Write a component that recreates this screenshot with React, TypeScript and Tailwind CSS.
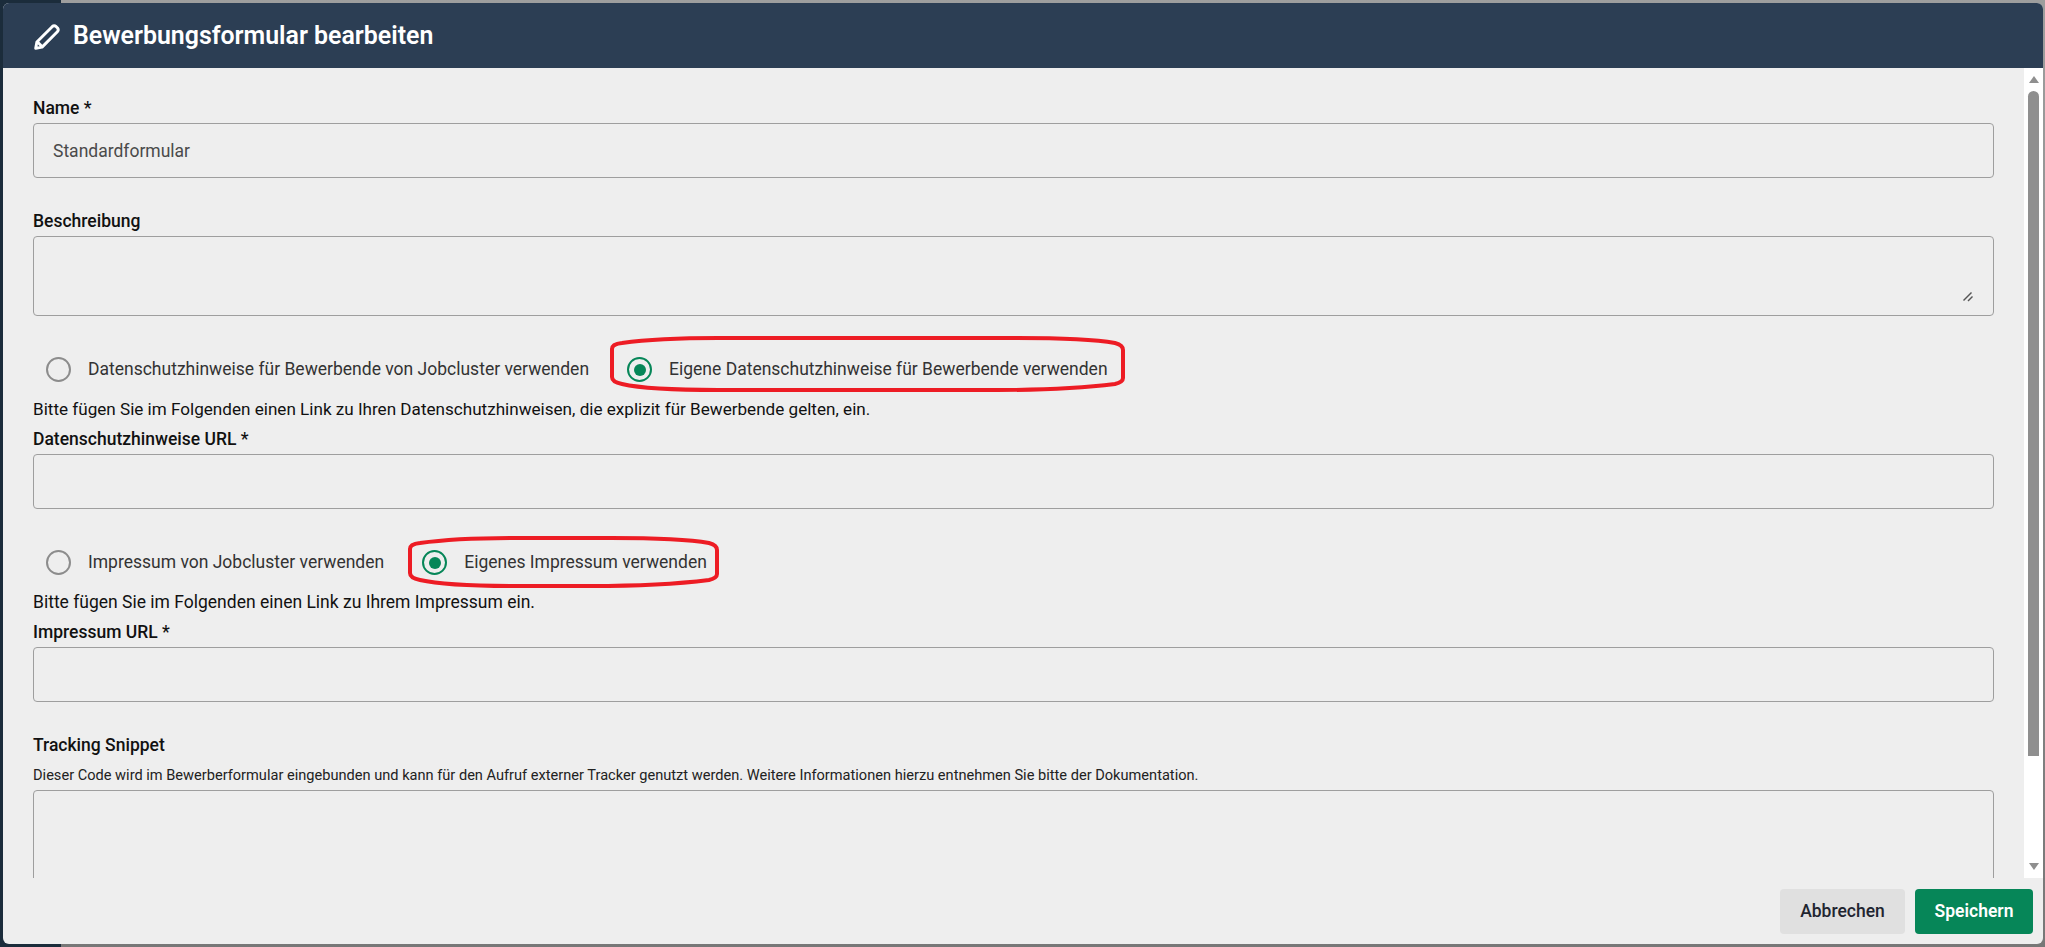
const inputClass =
  "block w-full h-[55px] rounded-[4px] border border-[#9e9e9e] bg-transparent px-[19px] text-[17.5px] text-[#4a4a4a] outline-none";

const Radio = ({ checked, label }: { checked?: boolean; label: string }) => (
  <label className="flex items-center">
    {checked ? (
      <span className="flex h-[25px] w-[25px] items-center justify-center rounded-full border-[2px] border-[#068658]">
        <span className="h-[12px] w-[12px] rounded-full bg-[#068658]" />
      </span>
    ) : (
      <span className="h-[25px] w-[25px] rounded-full border-[2px] border-[#8c8c8c]" />
    )}
    <span className="ml-[17px] text-[17.5px] text-[#333333]">{label}</span>
  </label>
);

const Label = ({ children }: { children: string }) => (
  <div className="text-[17.5px] leading-[24px] font-medium text-[#111111]">{children}</div>
);

const Oval = ({ className, w, h }: { className: string; w: number; h: number }) => (
  <svg className={className} width={w} height={h} viewBox={`0 0 ${w} ${h}`} fill="none">
    <path
      d={`M4 14 Q4 9 14 8 Q50 3 110 3 L${w - 110} 3 Q${w - 40} 3 ${w - 12} 8 Q${w - 4} 10 ${w - 4} 15 L${w - 4} ${h - 15} Q${w - 4} ${h - 11} ${w - 12} ${h - 9} Q${w - 60} ${h - 3} ${w - 130} ${h - 3} L110 ${h - 3} Q40 ${h - 3} 14 ${h - 9} Q4 ${h - 11} 4 ${h - 16} Z`}
      stroke="#ed1c24"
      strokeWidth="4"
    />
  </svg>
);

export default function App() {
  return (
    <div className="relative h-[947px] w-[2045px] overflow-hidden bg-[linear-gradient(#9e9e9e,#777777)] pt-[3px] pl-[3px] font-['Roboto',sans-serif]">
      <div className="absolute inset-y-0 left-0 w-[61px] bg-[#1b2c3b]" />

      <div className="relative flex h-[941px] w-[2040px] flex-col overflow-hidden rounded-[6px] bg-[#eeeeee]">
        <div className="flex h-[65px] shrink-0 items-center bg-[#2c3e54] pl-[30px]">
          <svg className="mt-[2px]" width="28" height="28" viewBox="0 0 26 26" fill="none" stroke="white" strokeWidth="2.7" strokeLinejoin="round">
            <path d="M2.5 23.5 L3.6 17.6 L17.8 3.4 Q19.6 1.8 21.6 3.4 L22.8 4.6 Q24.2 6.4 22.6 8.2 L8.4 22.4 Z" />
            <path d="M4 17.5 L8.5 22" />
          </svg>
          <h1 className="ml-[12px] text-[24.9px] font-semibold text-white">Bewerbungsformular bearbeiten</h1>
        </div>

        <div className="flex min-h-0 flex-1">
          <div className="min-w-0 flex-1 overflow-hidden pt-[28px] pr-[30px] pl-[30px]">
            <Label>Name *</Label>
            <input className={`${inputClass} mt-[3px]`} defaultValue="Standardformular" />

            <div className="mt-[31px]">
              <Label>Beschreibung</Label>
            </div>
            <div className="relative mt-[3px]">
              <textarea className="block h-[80px] w-full resize-none rounded-[4px] border border-[#9e9e9e] bg-transparent outline-none" />
              <svg className="absolute right-[21px] bottom-[14px]" width="10" height="10" viewBox="0 0 10 10" stroke="#555555" strokeWidth="1.4">
                <path d="M0.5 8.5 L8.5 0.5" />
                <path d="M5 9 L9.5 4.5" />
              </svg>
            </div>

            <div className="mt-[41px] flex h-[25px] items-center pl-[13px]">
              <Radio label="Datenschutzhinweise für Bewerbende von Jobcluster verwenden" />
              <div className="ml-[38px]">
                <Radio checked label="Eigene Datenschutzhinweise für Bewerbende verwenden" />
              </div>
            </div>
            <p className="mt-[15px] text-[17.1px] leading-[24px] text-[#111111]">
              Bitte fügen Sie im Folgenden einen Link zu Ihren Datenschutzhinweisen, die explizit für Bewerbende gelten, ein.
            </p>
            <div className="mt-[6px]">
              <Label>Datenschutzhinweise URL *</Label>
            </div>
            <input className={`${inputClass} mt-[3px]`} />

            <div className="mt-[41px] flex h-[25px] items-center pl-[13px]">
              <Radio label="Impressum von Jobcluster verwenden" />
              <div className="ml-[38px]">
                <Radio checked label="Eigenes Impressum verwenden" />
              </div>
            </div>
            <p className="mt-[15px] text-[17.5px] leading-[24px] text-[#111111]">
              Bitte fügen Sie im Folgenden einen Link zu Ihrem Impressum ein.
            </p>
            <div className="mt-[6px]">
              <Label>Impressum URL *</Label>
            </div>
            <input className={`${inputClass} mt-[3px]`} />

            <div className="mt-[31px]">
              <Label>Tracking Snippet</Label>
            </div>
            <p className="mt-[8px] text-[14.6px] leading-[20px] text-[#222222]">
              Dieser Code wird im Bewerberformular eingebunden und kann für den Aufruf externer Tracker genutzt werden. Weitere Informationen hierzu entnehmen Sie bitte der Dokumentation.
            </p>
            <div className="mt-[5px] h-[140px] w-full rounded-[4px] border border-[#9e9e9e]" />
          </div>

          <div className="flex w-[19px] shrink-0 flex-col items-center bg-white pt-[8px]">
            <div className="h-0 w-0 border-x-[5px] border-b-[7px] border-x-transparent border-b-[#8f8f8f]" />
            <div className="mt-[8px] h-[665px] w-[11px] rounded-t-[6px] bg-[#8f8f8f]" />
            <div className="mt-auto mb-[8px] h-0 w-0 border-x-[5px] border-t-[7px] border-x-transparent border-t-[#8f8f8f]" />
          </div>
        </div>

        <div className="flex h-[66px] shrink-0 items-center justify-end gap-[10px] pr-[10px]">
          <button className="h-[45px] w-[125px] rounded-[4px] bg-[#e0e0e0] text-[17.5px] font-medium text-[#1f2530]">Abbrechen</button>
          <button className="h-[45px] w-[118px] rounded-[4px] bg-[#068658] text-[17.5px] font-semibold text-white">Speichern</button>
        </div>

        <Oval className="absolute top-[332px] left-[605px]" w={519} h={58} />
        <Oval className="absolute top-[532px] left-[403px]" w={315} h={54} />
      </div>
    </div>
  );
}
